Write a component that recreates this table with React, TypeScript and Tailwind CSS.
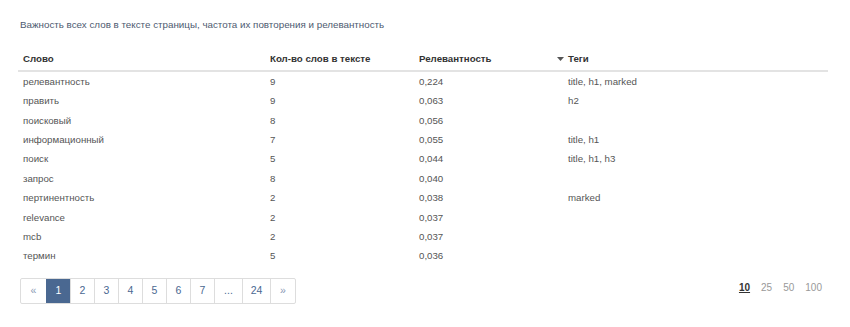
import React from "react";

const rows = [
  ["релевантность", "9", "0,224", "title, h1, marked"],
  ["править", "9", "0,063", "h2"],
  ["поисковый", "8", "0,056", ""],
  ["информационный", "7", "0,055", "title, h1"],
  ["поиск", "5", "0,044", "title, h1, h3"],
  ["запрос", "8", "0,040", ""],
  ["пертинентность", "2", "0,038", "marked"],
  ["relevance", "2", "0,037", ""],
  ["mcb", "2", "0,037", ""],
  ["термин", "5", "0,036", ""],
];

const pages = ["«", "1", "2", "3", "4", "5", "6", "7", "...", "24", "»"];

export default function App() {
  return (
    <div className="w-[850px] h-[327px] bg-white font-['Liberation_Sans',Arial,sans-serif] text-[9.7px] text-[#444]">
      <div className="pt-[19px] pl-[20px] text-[9.8px] text-[#4d5a70] leading-[12px]">
        Важность всех слов в тексте страницы, частота их повторения и релевантность
      </div>

      <div className="ml-[18px] mr-[22px] mt-[17px]">
        <div className="grid grid-cols-[247px_149px_149px_1fr] h-[24px] items-center font-bold text-[#333] border-b-2 border-[#e3e3e3]">
          <div className="pl-[5px]">Слово</div>
          <div className="pl-[5px]">Кол-во слов в тексте</div>
          <div className="pl-[5px]">Релевантность</div>
          <div className="pl-[5px] flex items-center">
            <svg width="7" height="4" viewBox="0 0 7 4" className="-ml-[11px] mr-[4px]">
              <path d="M0 0h7L3.5 4z" fill="#555" />
            </svg>
            Теги
          </div>
        </div>
        {rows.map((r, i) => (
          <div
            key={i}
            className="grid grid-cols-[247px_149px_149px_1fr] h-[19.4px] items-center pt-[1px] text-[#555]"
          >
            <div className="pl-[5px]">{r[0]}</div>
            <div className="pl-[5px]">{r[1]}</div>
            <div className="pl-[5px]">{r[2]}</div>
            <div className="pl-[5px]">{r[3]}</div>
          </div>
        ))}
      </div>

      <div className="flex items-start justify-between ml-[20px] mr-[28px] mt-[12px]">
        <div className="flex border border-[#ddd] rounded-[2px] text-[10.5px]">
          {pages.map((p, i) => (
            <div
              key={i}
              className={
                p === "1"
                  ? "h-[24px] w-[24px] flex items-center justify-center bg-[#4a6891] text-white border-l border-[#4a6891]"
                  : p === "..." || p === "24"
                  ? "h-[24px] w-[28px] flex items-center justify-center text-[#4a6891] border-l border-[#ddd] first:border-l-0"
                  : p === "«" || p === "»"
                  ? "h-[24px] w-[25px] flex items-center justify-center text-[#8a9ab5] border-l border-[#ddd] first:border-l-0"
                  : "h-[24px] w-[24px] flex items-center justify-center text-[#4a6891] border-l border-[#ddd] first:border-l-0"
              }
            >
              {p}
            </div>
          ))}
        </div>
        <div className="flex gap-[11px] mt-[2px] text-[10px] text-[#999]">
          <span className="font-bold text-[#333] underline">10</span>
          <span>25</span>
          <span>50</span>
          <span>100</span>
        </div>
      </div>
    </div>
  );
}
